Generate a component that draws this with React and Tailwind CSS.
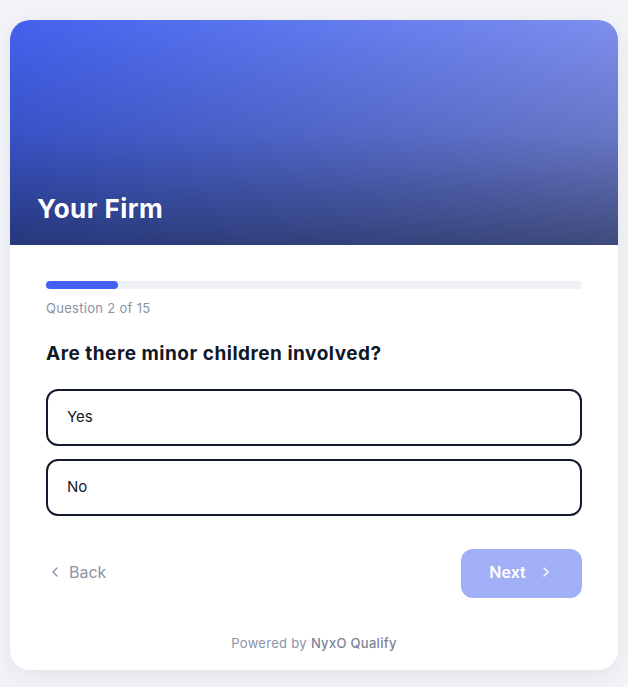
import React from "react";

function ChevronLeft({ className }) {
  return (
    <svg className={className} viewBox="0 0 24 24" fill="none" stroke="currentColor" strokeWidth="2" strokeLinecap="round" strokeLinejoin="round">
      <path d="M15 18l-6-6 6-6" />
    </svg>
  );
}

function ChevronRight({ className }) {
  return (
    <svg className={className} viewBox="0 0 24 24" fill="none" stroke="currentColor" strokeWidth="2" strokeLinecap="round" strokeLinejoin="round">
      <path d="M9 18l6-6-6-6" />
    </svg>
  );
}

const options = ["Yes", "No"];

export default function App() {
  return (
    <div className="min-h-[687px] w-full bg-[#f3f4f8] pt-[20px] px-[10px] font-['Inter',sans-serif]">
      <div className="w-[608px] rounded-[20px] bg-white shadow-[0_6px_24px_rgba(30,40,90,0.08)] overflow-hidden">
        {/* Branded header */}
        <div className="relative h-[225px] bg-gradient-to-r from-[#4361ee] to-[#7e8fee]">
          <div className="absolute inset-0 bg-gradient-to-t from-[rgba(17,24,39,0.58)] via-[rgba(17,24,39,0.2)] to-transparent" />
          <div className="relative flex h-full items-end px-[27px] pb-[20px]">
            <h1 className="text-[26px] leading-[32px] font-bold tracking-[0.5px] text-white">Your Firm</h1>
          </div>
        </div>

        {/* Question body */}
        <div className="px-[36px] pt-[36px] pb-[17px]">
          <div className="h-2 w-full rounded-full bg-[#f0f1f6]">
            <div className="h-2 w-[72px] rounded-full bg-[#4361ee]" />
          </div>
          <p className="mt-[9px] text-[13px] leading-[20px] tracking-[0.3px] text-[#8b93a7]">Question 2 of 15</p>

          <h2 className="mt-[22px] text-[19px] leading-[28px] font-bold tracking-[0.5px] text-[#111827]">
            Are there minor children involved?
          </h2>

          <div className="mt-[21px] flex flex-col gap-[13px]">
            {options.map((o) => (
              <button
                key={o}
                className="flex h-[57px] w-full items-center rounded-[12px] border-2 border-[#141a2e] bg-white pl-[19px] pb-[1px] text-left text-[15px] text-[#111827]"
              >
                {o}
              </button>
            ))}
          </div>

          <div className="mt-[33px] flex items-center justify-between">
            <button className="flex items-center gap-[6px] pl-[1px] pb-[4px] text-[16px] text-[#8b93a7]">
              <ChevronLeft className="h-4 w-4" />
              Back
            </button>
            <button className="flex h-[49px] w-[121px] items-center justify-center gap-[12px] rounded-[12px] bg-[#a1b0f6] pb-[3px] text-[16px] font-semibold text-white">
              Next
              <ChevronRight className="h-4 w-4" />
            </button>
          </div>

          <p className="mt-[35px] text-center text-[13px] leading-[20px] tracking-[0.3px] text-[#8b93a7]">
            Powered by <span className="font-medium text-[#7c8499]">NyxO Qualify</span>
          </p>
        </div>
      </div>
    </div>
  );
}
